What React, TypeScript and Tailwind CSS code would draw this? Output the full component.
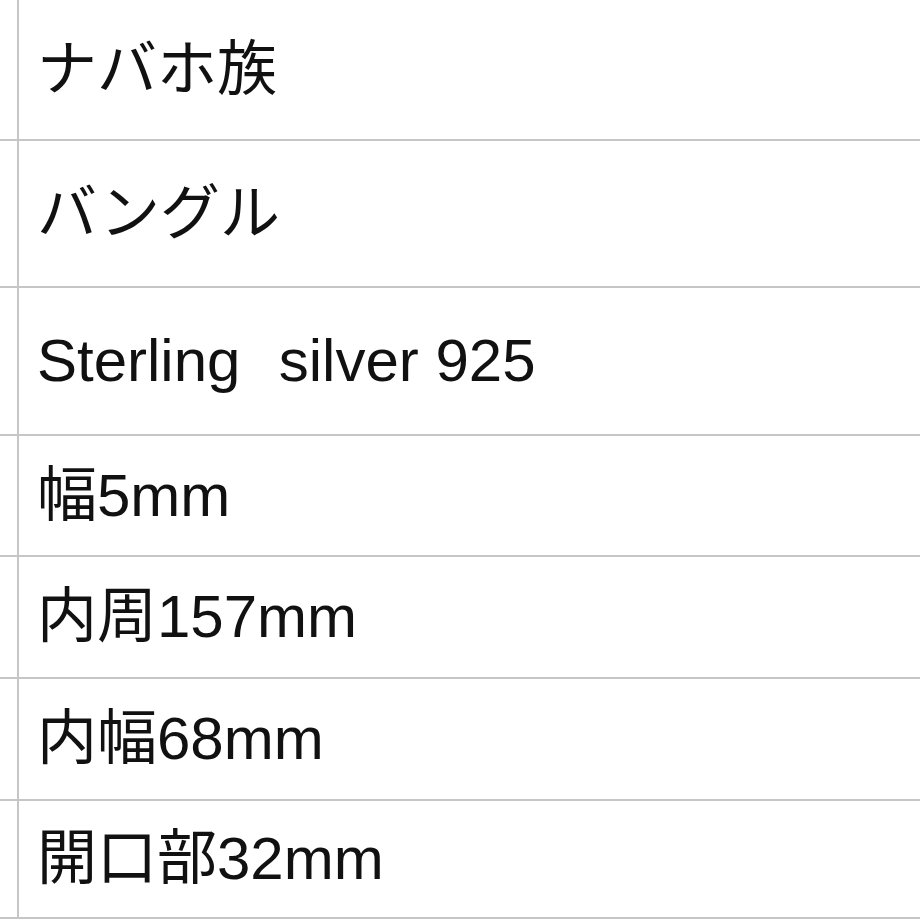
import type { ReactNode } from 'react';

const rows: { text: ReactNode; h: string }[] = [
  { text: 'ナバホ族', h: 'h-[141px]' },
  { text: 'バングル', h: 'h-[147px]' },
  {
    text: (
      <>
        <span className="mr-[5px]">Sterling{'\u00a0\u00a0'}</span>silver 925
      </>
    ),
    h: 'h-[148px]',
  },
  { text: '幅5mm', h: 'h-[121px]' },
  { text: '内周157mm', h: 'h-[122px]' },
  { text: '内幅68mm', h: 'h-[122px]' },
  { text: '開口部32mm', h: 'h-[118px]' },
];

export default function App() {
  return (
    <div
      className="w-[920px] h-[920px] overflow-hidden bg-white text-[#111]"
      style={{ fontFamily: '"Liberation Sans", "Noto Sans CJK JP", sans-serif' }}
    >
      {rows.map((r, i) => (
        <div key={i} className={`flex border-b-2 border-[#c6c6c6] ${r.h}`}>
          <div className="w-[17px] shrink-0" />
          <div className="flex flex-1 items-center border-l-2 border-[#c6c6c6] pl-[18px] text-[60px] leading-none whitespace-nowrap">
            {r.text}
          </div>
        </div>
      ))}
    </div>
  );
}
